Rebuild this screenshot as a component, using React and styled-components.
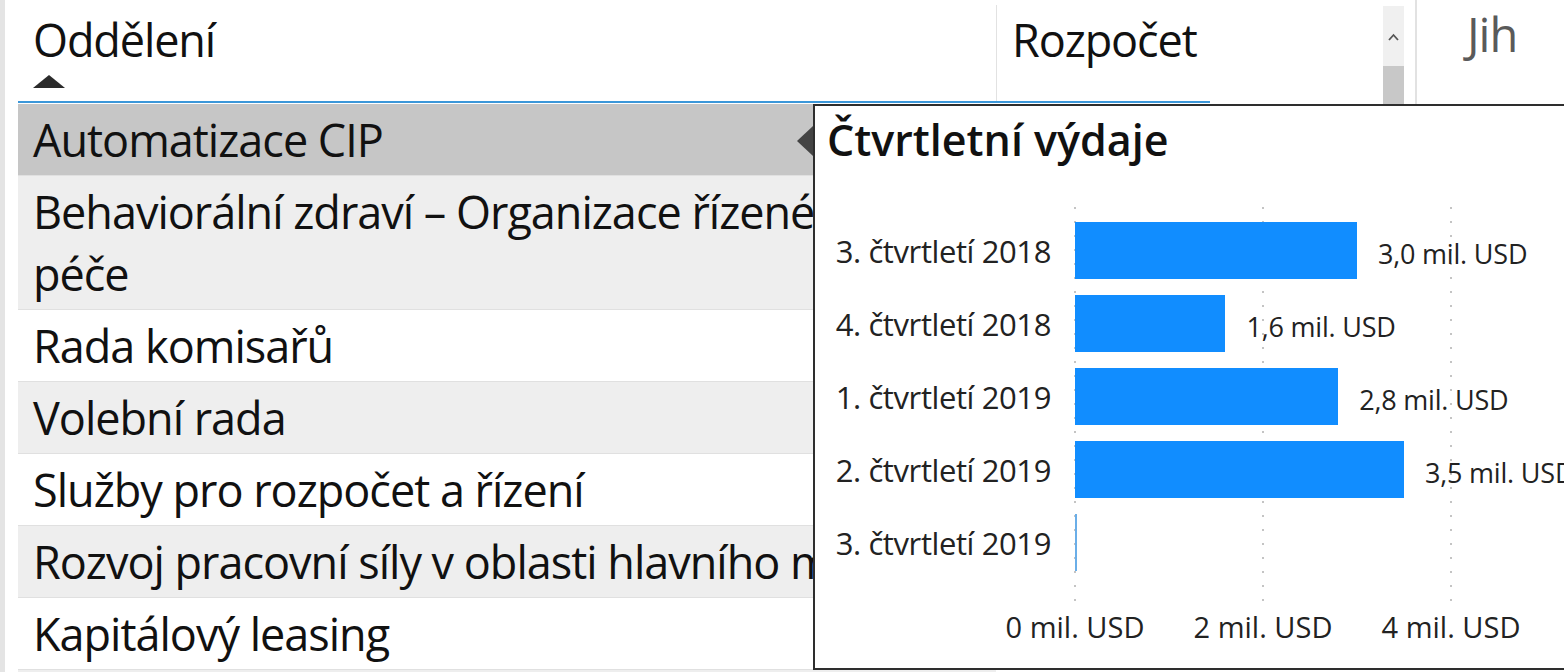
import React from 'react'
import styled, { createGlobalStyle } from 'styled-components'

const GlobalStyle = createGlobalStyle`
  html, body {
    margin: 0;
    padding: 0;
    background: #ffffff;
    overflow: hidden;
  }
  body {
    font-family: "Open Sans", "Noto Sans", sans-serif;
    color: #111;
  }
`;

const Page = styled.div`
  position: relative;
  display: flex;
  align-items: flex-start;
  height: 672px;
  width: 1564px;
  overflow: hidden;
`;

const EdgeStrip = styled.div`
  width: 5px;
  height: 672px;
  flex-shrink: 0;
  background: #e4e4e4;
`;

const TableVisual = styled.div`
  display: flex;
  margin-left: 13px;
  flex-shrink: 0;
`;

const TableMain = styled.div`
  width: 1365px;
`;

const HeaderRow = styled.div`
  display: flex;
  height: 101px;
`;

const HeaderCell = styled.div`
  width: ${p => p.width}px;
  box-sizing: border-box;
  padding: ${p => (p.divided ? 7 : 12)}px 15px 0;
  margin-top: ${p => (p.divided ? 5 : 0)}px;
  border-left: ${p => (p.divided ? '1px solid #e2e2e2' : 'none')};
  font-size: 45px;
  line-height: 56px;
  letter-spacing: -1.1px;
`;

const SortArrow = styled.div`
  width: 0;
  height: 0;
  margin-top: 7px;
  border-left: 16px solid transparent;
  border-right: 16px solid transparent;
  border-bottom: 13px solid #2b2b2b;
`;

const HeaderUnderline = styled.div`
  width: 1192px;
  height: 2px;
  background: #3b97d9;
  margin-bottom: 1px;
`;

const rowBg = { selected: '#c6c6c6', shaded: '#eeeeee', plain: '#ffffff' };

const Row = styled.div`
  width: 978px;
  box-sizing: border-box;
  padding: 5px 15px 4px;
  border-bottom: 1px solid #e0e0e0;
  background: ${p => rowBg[p.tone]};
  font-size: 45px;
  line-height: 62px;
  letter-spacing: -1px;
  white-space: ${p => (p.wrap ? 'pre-line' : 'nowrap')};
  overflow: hidden;
`;

const Scrollbar = styled.div`
  width: 21px;
  margin-top: 6px;
  display: flex;
  flex-direction: column;
`;

const ScrollTop = styled.div`
  height: 60px;
  background: #f0f0f0;
  display: flex;
  justify-content: center;
  padding-top: 27px;
  box-sizing: border-box;
`;

const ScrollThumb = styled.div`
  height: 260px;
  background: #c8c8c8;
`;

const Divider = styled.div`
  width: 2px;
  height: 105px;
  margin-left: 11px;
  background: #e2e2e2;
  flex-shrink: 0;
`;

const SideVisual = styled.div`
  padding: 6px 0 0 50px;
  font-size: 47px;
  line-height: 56px;
  letter-spacing: -1px;
  color: #5a5a5a;
`;

const Tooltip = styled.div`
  position: absolute;
  left: 813px;
  top: 104px;
  width: 780px;
  height: 566px;
  box-sizing: border-box;
  border: 2px solid #2e2e2e;
  background: #ffffff;
  padding: 0 12px;
`;

const TooltipArrow = styled.div`
  position: absolute;
  left: -18px;
  top: 20px;
  width: 0;
  height: 0;
  border-top: 15px solid transparent;
  border-bottom: 15px solid transparent;
  border-right: 16px solid #444;
`;

const TooltipTitle = styled.div`
  height: 70px;
  font-size: 43px;
  font-weight: 600;
  line-height: 68px;
  color: #111;
`;

const ChartBody = styled.div`
  position: relative;
  margin-top: 38px;
`;

const Gridlines = styled.svg`
  position: absolute;
  left: 247px;
  top: -9px;
  width: 400px;
  height: 396px;
`;

const BarRow = styled.div`
  position: relative;
  display: grid;
  grid-template-columns: 224px 1fr;
  column-gap: 24px;
  align-items: center;
  height: 73px;
`;

const Category = styled.div`
  text-align: right;
  font-size: 31px;
  line-height: 40px;
  letter-spacing: -0.4px;
  color: #222;
  white-space: nowrap;
`;

const BarTrack = styled.div`
  display: flex;
  align-items: center;
`;

const Bar = styled.div`
  height: 57px;
  background: ${p => (p.tiny ? '#6aaee8' : '#118dff')};
  flex-shrink: 0;
`;

const ValueLabel = styled.span`
  margin-left: 21px;
  margin-top: 6px;
  font-size: 27px;
  line-height: 34px;
  letter-spacing: -0.2px;
  color: #222;
  white-space: nowrap;
`;

const AxisRow = styled.div`
  display: flex;
  margin: 28px 0 0 154px;
`;

const AxisLabel = styled.div`
  width: 188px;
  text-align: center;
  font-size: 29px;
  line-height: 40px;
  color: #222;
  white-space: nowrap;
`;

const departments = [
  { name: 'Automatizace CIP', tone: 'selected' },
  { name: 'Behaviorální zdraví – Organizace řízené\npéče', tone: 'shaded', wrap: true },
  { name: 'Rada komisařů', tone: 'plain' },
  { name: 'Volební rada', tone: 'shaded' },
  { name: 'Služby pro rozpočet a řízení', tone: 'plain' },
  { name: 'Rozvoj pracovní síly v oblasti hlavního města', tone: 'shaded' },
  { name: 'Kapitálový leasing', tone: 'plain' },
  { name: 'Kancelář správce okresu', tone: 'shaded' },
];

const quarters = [
  { label: '3. čtvrtletí 2018', value: 3.0, text: '3,0 mil. USD' },
  { label: '4. čtvrtletí 2018', value: 1.6, text: '1,6 mil. USD' },
  { label: '1. čtvrtletí 2019', value: 2.8, text: '2,8 mil. USD' },
  { label: '2. čtvrtletí 2019', value: 3.5, text: '3,5 mil. USD' },
  { label: '3. čtvrtletí 2019', value: 0.02, text: null },
];

const PX_PER_MIL = 94;

function ChevronUp() {
  return (
    <svg width="11" height="8" viewBox="0 0 11 8">
      <path d="M1 7 L5.5 2 L10 7" fill="none" stroke="#555" strokeWidth="1.8" />
    </svg>
  );
}

function QuarterTooltip() {
  return (
    <Tooltip>
      <TooltipArrow />
      <TooltipTitle>Čtvrtletní výdaje</TooltipTitle>
      <ChartBody>
        <Gridlines viewBox="0 0 400 396">
          {[1, 189, 377].map(x => (
            <line key={x} x1={x} y1="2" x2={x} y2="396" stroke="#c4c4c4"
              strokeWidth="2" strokeDasharray="2 12" />
          ))}
        </Gridlines>
        {quarters.map(q => (
          <BarRow key={q.label}>
            <Category>{q.label}</Category>
            <BarTrack>
              <Bar tiny={!q.text} style={{ width: Math.max(2, q.value * PX_PER_MIL) }} />
              {q.text && <ValueLabel>{q.text}</ValueLabel>}
            </BarTrack>
          </BarRow>
        ))}
      </ChartBody>
      <AxisRow>
        <AxisLabel>0 mil. USD</AxisLabel>
        <AxisLabel>2 mil. USD</AxisLabel>
        <AxisLabel>4 mil. USD</AxisLabel>
      </AxisRow>
    </Tooltip>
  );
}

export default function App() {
  return (
    <>
      <GlobalStyle />
      <Page>
        <EdgeStrip />
        <TableVisual>
          <TableMain>
            <HeaderRow>
              <HeaderCell width={978}>
                Oddělení
                <SortArrow />
              </HeaderCell>
              <HeaderCell width={387} divided>Rozpočet</HeaderCell>
            </HeaderRow>
            <HeaderUnderline />
            {departments.map(d => (
              <Row key={d.name} tone={d.tone} wrap={d.wrap}>{d.name}</Row>
            ))}
          </TableMain>
          <Scrollbar>
            <ScrollTop><ChevronUp /></ScrollTop>
            <ScrollThumb />
          </Scrollbar>
        </TableVisual>
        <Divider />
        <SideVisual>Jih</SideVisual>
        <QuarterTooltip />
      </Page>
    </>
  );
}
